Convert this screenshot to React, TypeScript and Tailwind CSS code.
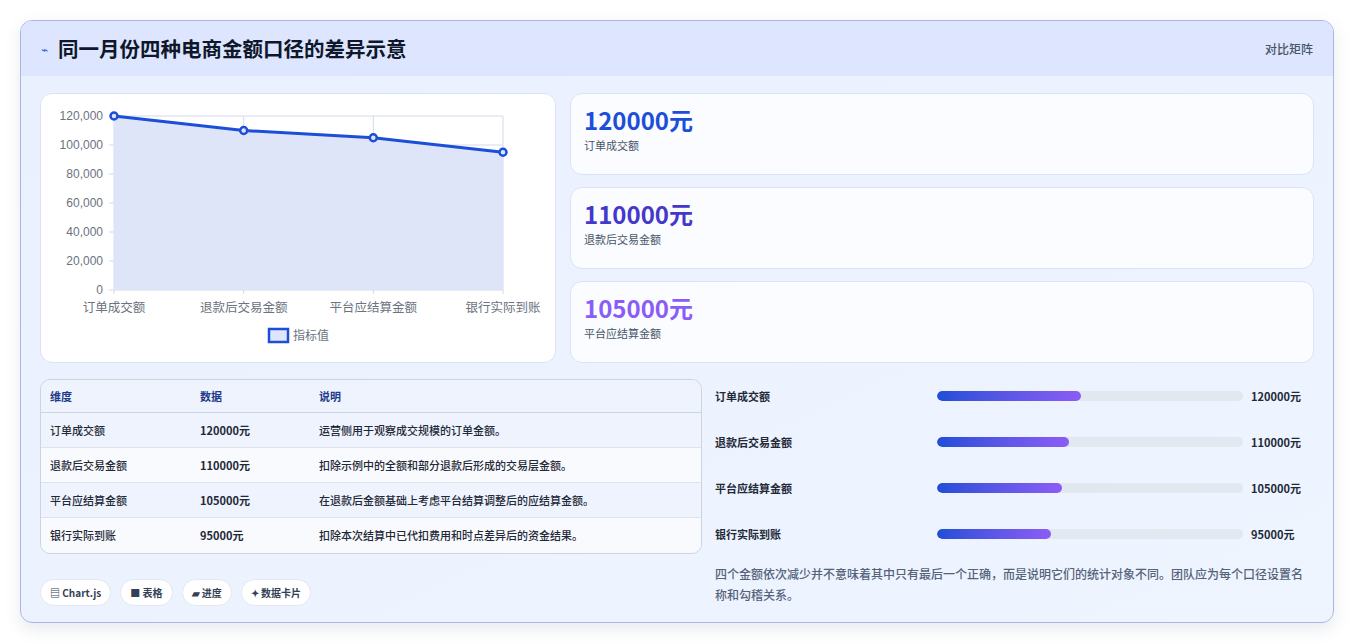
import React from "react";

const F = { fontFamily: '"Noto Sans CJK SC","Noto Sans",sans-serif' };
const rows = [
  ["订单成交额", "120000元", "运营侧用于观察成交规模的订单金额。", 47],
  ["退款后交易金额", "110000元", "扣除示例中的全额和部分退款后形成的交易层金额。", 43],
  ["平台应结算金额", "105000元", "在退款后金额基础上考虑平台结算调整后的应结算金额。", 41],
  ["银行实际到账", "95000元", "扣除本次结算中已代扣费用和时点差异后的资金结果。", 37.2],
] as const;

function Chart() {
  const xs = [73, 202.7, 332.3, 462];
  const vals = [120000, 110000, 105000, 95000];
  const y = (v: number) => 196 - (v / 120000) * 174;
  const pts = xs.map((x, i) => `${x},${y(vals[i])}`).join(" ");
  return (
    <svg width="516" height="269" className="block">
      {[0, 1, 2, 3, 4, 5, 6].map((i) => (
        <g key={i}>
          <line x1={68} x2={462} y1={22 + i * 29} y2={22 + i * 29} stroke="#d4dbe8" />
          <text x={62} y={26 + i * 29} textAnchor="end" fontSize="12" fill="#6b7280" fontFamily="Liberation Sans, sans-serif">
            {(120000 - i * 20000).toLocaleString("en-US")}
          </text>
        </g>
      ))}
      {xs.map((x) => (
        <line key={x} x1={x} x2={x} y1={22} y2={200} stroke="#d4dbe8" />
      ))}
      <polygon points={`73,196 ${pts} 462,196`} fill="#dfe5f8" />
      <polyline points={pts} fill="none" stroke="#1d4ed8" strokeWidth="3" />
      {xs.map((x, i) => (
        <circle key={x} cx={x} cy={y(vals[i])} r="3.5" fill="#dfe5f8" stroke="#1d4ed8" strokeWidth="2.5" />
      ))}
      {["订单成交额", "退款后交易金额", "平台应结算金额", "银行实际到账"].map((t, i) => (
        <text key={t} x={i === 3 ? 462 : xs[i]} y={218} textAnchor="middle" fontSize="12.5" fill="#6b7280" style={F}>
          {t}
        </text>
      ))}
      <rect x={228} y={235} width={19} height={13} fill="#dfe5f8" stroke="#1d4ed8" strokeWidth="2.5" />
      <text x={252} y={246} fontSize="12" fill="#6b7280" style={F}>指标值</text>
    </svg>
  );
}

export default function App() {
  return (
    <div className="w-[1354px] h-[644px] bg-white pt-[20px] pl-[20px]" style={F}>
      <div className="w-[1314px] h-[603px] rounded-[12px] border border-[#aab6e8] bg-gradient-to-br from-[#eaf0fe] to-[#eef5ff] overflow-hidden shadow-[0_6px_16px_rgba(100,116,139,0.15)]">
        <div className="h-[55px] bg-[#dde6fe] flex items-center justify-between px-[20px]">
          <div className="flex items-center gap-[10px]">
            <span className="text-[#3b5bdb] text-[12px]">⌁</span>
            <span className="text-[20.5px] font-bold text-[#0f172a]">同一月份四种电商金额口径的差异示意</span>
          </div>
          <span className="text-[12px] font-medium text-[#475569]">对比矩阵</span>
        </div>
        <div className="px-[19px] pt-[17px]">
          <div className="flex gap-[14px]">
            <div className="w-[516px] h-[270px] shrink-0 bg-white rounded-[12px] border border-[#dbe3f3]">
              <Chart />
            </div>
            <div className="flex-1 flex flex-col gap-[12px]">
              {[["120000元", "订单成交额", "text-[#1d4ed8]"], ["110000元", "退款后交易金额", "text-[#4338ca]"], ["105000元", "平台应结算金额", "text-[#8b5cf6]"]].map(([v, l, c]) => (
                <div key={v} className="h-[82px] bg-[#fafcff] rounded-[12px] border border-[#dbe3f3] px-[13px] pt-[10px]">
                  <div className={`text-[24px] font-bold leading-[32px] ${c}`}>{v}</div>
                  <div className="text-[11px] text-[#475569] mt-[1px]">{l}</div>
                </div>
              ))}
            </div>
          </div>
          <div className="flex gap-[13px] mt-[16px]">
            <div className="w-[662px] shrink-0">
              <div className="rounded-[10px] border border-[#cbd5e1] overflow-hidden text-[11px]">
                <div className="flex h-[33px] items-center bg-[#eef3fd] border-b border-[#cbd5e1] text-[#1e3a8a] font-bold">
                  <div className="w-[159px] pl-[9px]">维度</div>
                  <div className="w-[119px]">数据</div>
                  <div>说明</div>
                </div>
                {rows.map((r, i) => (
                  <div key={r[0]} className={`flex h-[35px] items-center text-[#1f2937] font-medium ${i % 2 ? "bg-[#f8fafd]" : "bg-[#eef3fd]"} ${i < 3 ? "border-b border-[#dde4ee]" : ""}`}>
                    <div className="w-[159px] pl-[9px]">{r[0]}</div>
                    <div className="w-[119px] font-bold">{r[1]}</div>
                    <div>{r[2]}</div>
                  </div>
                ))}
              </div>
              <div className="flex gap-[9px] mt-[25px] text-[10px] font-bold text-[#334155]">
                {["▤ Chart.js", "■ 表格", "▰ 进度", "✦ 数据卡片"].map((t) => (
                  <span key={t} className="h-[27px] px-[9px] flex items-center rounded-full bg-white border border-[#e2e8f0]">{t}</span>
                ))}
              </div>
            </div>
            <div className="flex-1 min-w-0 pr-[8px] -mt-[6px]">
              {rows.map((r) => (
                <div key={r[0]} className="flex items-center h-[46px] text-[11px] font-bold text-[#1f2937]">
                  <div className="w-[222px] shrink-0">{r[0]}</div>
                  <div className="w-[306px] shrink-0 h-[10px] rounded-full bg-[#e2e8f0] overflow-hidden">
                    <div className="h-full rounded-full bg-gradient-to-r from-[#1d4ed8] to-[#8b5cf6]" style={{ width: `${r[3]}%` }} />
                  </div>
                  <div className="ml-[8px]">{r[1]}</div>
                </div>
              ))}
              <p className="mt-[6px] text-[12px] leading-[21px] text-[#55627a] font-medium w-[596px]">
                四个金额依次减少并不意味着其中只有最后一个正确，而是说明它们的统计对象不同。团队应为每个口径设置名称和勾稽关系。
              </p>
            </div>
          </div>
        </div>
      </div>
    </div>
  );
}
